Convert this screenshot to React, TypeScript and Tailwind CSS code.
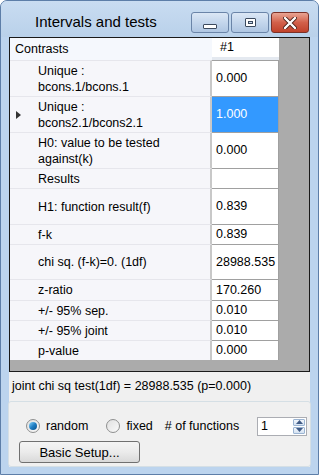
import React from "react";

const rows = [
  { label: ["Unique :", "bcons.1/bcons.1"], value: "0.000", h: "h-[36px]" },
  { label: ["Unique :", "bcons2.1/bcons2.1"], value: "1.000", h: "h-[36px]", current: true },
  { label: ["H0: value to be tested", "against(k)"], value: "0.000", h: "h-[36px]" },
  { label: ["Results"], value: "", h: "h-[20px]" },
  { label: ["H1: function result(f)"], value: "0.839", h: "h-[36px]" },
  { label: ["f-k"], value: "0.839", h: "h-[20px]" },
  { label: ["chi sq. (f-k)=0. (1df)"], value: "28988.535", h: "h-[35px]" },
  { label: ["z-ratio"], value: "170.260", h: "h-[21px]" },
  { label: ["+/- 95% sep."], value: "0.010", h: "h-[20px]" },
  { label: ["+/- 95% joint"], value: "0.010", h: "h-[20px]" },
  { label: ["p-value"], value: "0.000", h: "h-[20px]" },
];

function CaptionButton({ kind }: { kind: "min" | "max" | "close" }) {
  if (kind === "close") {
    return (
      <div className="w-[38px] h-[21px] rounded-[3px] border border-[#7b3128] bg-gradient-to-b from-[#e8a493] via-[#d2604a] to-[#c0412a] flex items-center justify-center">
        <svg width="14" height="12" viewBox="0 0 14 12">
          <path d="M2 1 L12 11 M12 1 L2 11" stroke="#4a2018" strokeWidth="4" strokeLinecap="round" />
          <path d="M2 1 L12 11 M12 1 L2 11" stroke="#ffffff" strokeWidth="2.4" strokeLinecap="round" />
        </svg>
      </div>
    );
  }
  return (
    <div className="w-[38px] h-[21px] rounded-[3px] border border-[#6a84a8] bg-gradient-to-b from-[#dbe7f5] via-[#c4d6ec] to-[#afc6e2] flex items-center justify-center">
      {kind === "min" ? (
        <div className="w-[14px] h-[5px] mt-[7px] bg-white border border-[#3c4a5e] rounded-[1px]" />
      ) : (
        <div className="w-[11px] h-[9px] bg-white border border-[#3c4a5e] rounded-[1px] flex items-center justify-center">
          <div className="w-[5px] h-[3px] border border-[#3c4a5e] bg-[#c4d6ec]" />
        </div>
      )}
    </div>
  );
}

function Radio({ checked, label }: { checked?: boolean; label: string }) {
  return (
    <div className="flex items-center gap-[6px]">
      <div className="w-[14px] h-[14px] rounded-full border border-[#8e8f8f] bg-gradient-to-br from-[#e0e0e0] to-[#fafafa] flex items-center justify-center">
        {checked && (
          <div className="w-[8px] h-[8px] rounded-full bg-gradient-to-br from-[#86d6fb] via-[#1f7fc4] to-[#0b4f8c]" />
        )}
      </div>
      <span>{label}</span>
    </div>
  );
}

export default function App() {
  return (
    <div
      className="w-[319px] h-[475px] overflow-hidden bg-[#bcd4ee] border border-[#5d7ea8] rounded-t-[7px] flex flex-col text-[12.5px] text-black"
      style={{ fontFamily: '"Liberation Sans", Arial, sans-serif' }}
    >
      {/* Title bar */}
      <div className="h-[36px] shrink-0 flex items-start bg-gradient-to-b from-[#c9dcf1] to-[#b9d1ea]">
        <div className="pl-[34px] pt-[12px] text-[15px] leading-[18px] flex-1">Intervals and tests</div>
        <div className="flex gap-[2px] pt-[11px] pr-[9px]">
          <CaptionButton kind="min" />
          <CaptionButton kind="max" />
          <CaptionButton kind="close" />
        </div>
      </div>

      {/* Client area */}
      <div className="mx-[8px] h-[430px] bg-[#f0f0f0] flex flex-col">
        {/* Grid */}
        <div className="h-[335px] border border-[#1a1a1a] bg-[#ababab] flex flex-col">
          <div className="h-[22px] flex shrink-0">
            <div className="w-[202px] bg-[#f5f8fd] pl-[5px] flex items-center">Contrasts</div>
            <div className="w-[67px] bg-white border-b-[3px] border-[#e4e9f0] pl-[8px] flex items-center">#1</div>
          </div>
          {rows.map((r, i) => (
            <div key={i} className={`${r.h} flex shrink-0`}>
              <div className="w-[202px] bg-[#f6f6fa] border-t border-[#e6e6ec] border-r-[2px] border-r-[#c8c8c8] flex items-center relative">
                {r.current && (
                  <svg className="absolute left-[6px] top-1/2 -translate-y-1/2" width="5" height="8" viewBox="0 0 5 8">
                    <path d="M0 0 L5 4 L0 8 Z" fill="#333" />
                  </svg>
                )}
                <div className="pl-[28px] leading-[16px]">
                  {r.label.map((l, j) => (
                    <div key={j}>{l}</div>
                  ))}
                </div>
              </div>
              <div
                className={`w-[67px] border-t border-r border-[#a0a0a0] pl-[4px] flex items-center ${
                  r.current ? "bg-[#3399ff] text-white" : "bg-white"
                }`}
              >
                {r.value}
              </div>
            </div>
          ))}
        </div>

        {/* Status */}
        <div className="pl-[3px] pt-[6px] h-[29px] leading-[16px]">joint chi sq test(1df) = 28988.535 (p=0.000)</div>

        {/* Options group */}
        <div className="mx-[-1px] h-[66px] border border-[#d5dfe5] rounded-[3px] pl-[17px] pr-[10px] pt-[14px] flex flex-col gap-[5px]">
          <div className="flex items-center h-[20px]">
            <Radio checked label="random" />
            <div className="ml-[18px]">
              <Radio label="fixed" />
            </div>
            <span className="ml-[12px]">
              # of functions
            </span>
            <div className="ml-auto mr-[-7px] w-[50px] h-[19px] bg-white border border-[#abadb3] flex items-center">
              <span className="pl-[3px] flex-1">1</span>
              <div className="w-[14px] h-full flex flex-col gap-px p-px">
                <div className="flex-1 rounded-[1px] border border-[#9bb4d2] bg-gradient-to-b from-[#f2f6fb] to-[#d4e2f2] flex items-center justify-center">
                  <svg width="7" height="4" viewBox="0 0 7 4">
                    <path d="M0 4 L3.5 0 L7 4 Z" fill="#3f5a85" />
                  </svg>
                </div>
                <div className="flex-1 rounded-[1px] border border-[#9bb4d2] bg-gradient-to-b from-[#f2f6fb] to-[#d4e2f2] flex items-center justify-center">
                  <svg width="7" height="4" viewBox="0 0 7 4">
                    <path d="M0 0 L3.5 4 L7 0 Z" fill="#3f5a85" />
                  </svg>
                </div>
              </div>
            </div>
          </div>
          <div className="ml-[-7px]">
            <button className="w-[121px] h-[22px] rounded-[3px] border border-[#707070] bg-gradient-to-b from-[#f4f4f4] via-[#ebebeb] to-[#d9d9d9] text-[13px] leading-none">
              Basic Setup...
            </button>
          </div>
        </div>
      </div>
    </div>
  );
}
